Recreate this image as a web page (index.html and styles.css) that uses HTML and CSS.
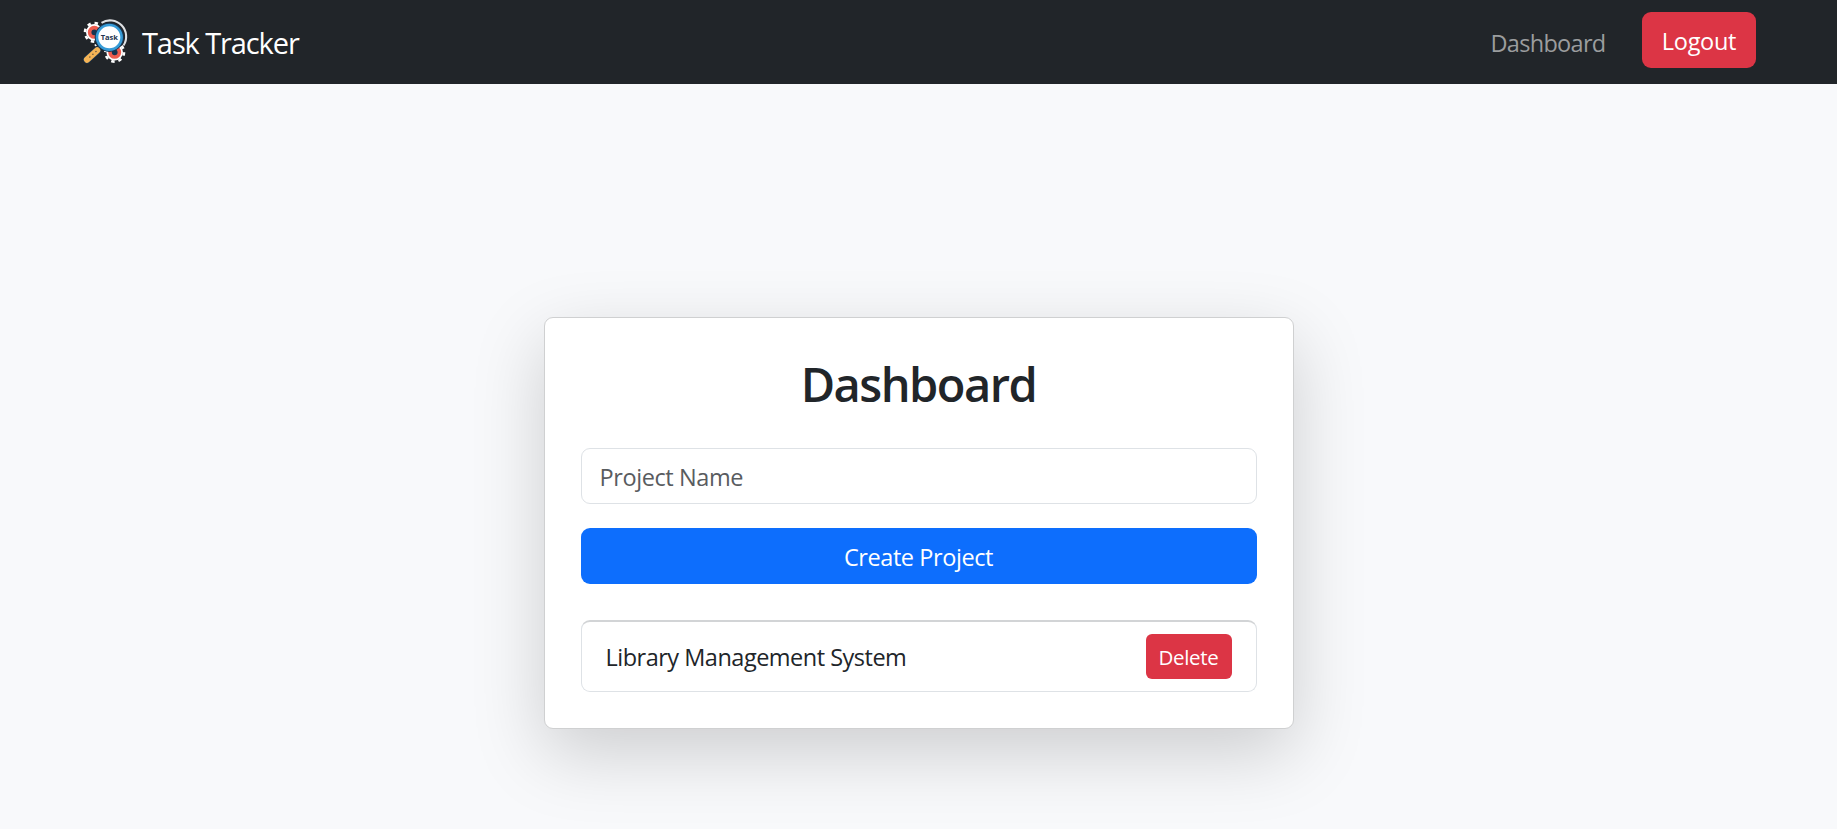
FILE: index.html
```
<!DOCTYPE html>
<html lang="en">
<head>
<meta charset="utf-8">
<title>Task Tracker</title>
<link rel="stylesheet" href="styles.css">
</head>
<body>
<nav class="navbar">
  <a class="brand" href="#">
    <svg class="logo" viewBox="0 0 52 52" aria-hidden="true">
      <g fill="none" stroke="#fff">
        <circle cx="14.3" cy="16.3" r="7" stroke-width="2.6"/>
        <circle cx="14.3" cy="16.3" r="9.3" stroke-width="2.6" stroke-dasharray="3.4 3.9"/>
        <circle cx="34.7" cy="36.3" r="7" stroke-width="2.6"/>
        <circle cx="34.7" cy="36.3" r="9.3" stroke-width="2.6" stroke-dasharray="3.4 3.9"/>
      </g>
      <g fill="#18344f" stroke="#ee5c4e" stroke-width="3.6">
        <circle cx="14.3" cy="16.3" r="4.7"/>
        <circle cx="34.7" cy="36.3" r="4.7"/>
      </g>
      <path d="M21.5 6.8A16.2 16.2 0 0 1 43.5 29.5" fill="none" stroke="#dfe1e4" stroke-width="2.1"/>
      <path d="M14.8 28.5l1.5 1.5M18 32l2-2" stroke="#fff" stroke-width="1.6"/>
      <path d="M17.2 34.4L7 43.6" stroke="#18344f" stroke-width="7.6" stroke-linecap="round"/>
      <path d="M17.2 34.4L7 43.6" stroke="#f5b455" stroke-width="6.2" stroke-linecap="round"/>
      <path d="M16 35.5L7 43.6" stroke="#59503f" stroke-width="1.4" stroke-linecap="round" stroke-dasharray=".1 4"/>
      <circle cx="29.3" cy="21.3" r="14.6" fill="#18344f"/>
      <circle cx="29.3" cy="21.3" r="12.3" fill="#fff" stroke="#369bd7" stroke-width="2.6"/>
      <text x="29.3" y="23.8" class="logo-text">Task</text>
    </svg>
    <span class="brand-name">Task Tracker</span>
  </a>
  <div class="nav-links">
    <a class="nav-link" href="#">Dashboard</a>
    <button class="btn btn-logout">Logout</button>
  </div>
</nav>
<main class="page">
  <section class="card">
    <h1 class="title">Dashboard</h1>
    <input class="field" type="text" placeholder="Project Name">
    <button class="btn btn-create">Create Project</button>
    <ul class="projects">
      <li class="project">
        <span class="project-name">Library Management System</span>
        <button class="btn btn-delete">Delete</button>
      </li>
    </ul>
  </section>
</main>
</body>
</html>
```
FILE: styles.css
```
* { box-sizing: border-box; }
body {
  margin: 0;
  height: 829px;
  display: flex;
  flex-direction: column;
  overflow: hidden;
  background: #f8f9fb;
  color: #212529;
  font-family: "Open Sans", "Noto Sans", sans-serif;
  font-size: 23.5px;
  letter-spacing: -.5px;
}
.navbar {
  height: 84px;
  flex: none;
  display: flex;
  justify-content: space-between;
  align-items: flex-start;
  padding: 12px 81px 0 80px;
  background: #212529;
}
.brand {
  display: flex;
  align-items: flex-start;
  gap: 10px;
  color: #fff;
  text-decoration: none;
}
.logo { width: 52px; height: 52px; margin-top: 4.3px; }
.logo-text { font: 700 7.5px "Open Sans", sans-serif; letter-spacing: 0; fill: #22344f; text-anchor: middle; }
.brand-name { font-size: 29px; line-height: 62px; letter-spacing: -1.1px; }
.nav-links { display: flex; align-items: flex-start; gap: 36.5px; }
.nav-link { color: #9b9d9e; text-decoration: none; line-height: 62px; letter-spacing: -.7px; }
.btn {
  border: 0;
  border-radius: 9px;
  color: #fff;
  font: inherit;
  letter-spacing: -.42px;
  padding: 2px 0 0;
  height: 56px;
  white-space: nowrap;
}
.btn-logout { width: 114px; background: #dc3545; letter-spacing: -.3px; }
.page {
  flex: 1;
  display: flex;
  justify-content: center;
  align-items: flex-start;
  padding-top: 233px;
}
.card {
  width: 750px;
  height: 412px;
  padding: 36px;
  background: #fff;
  border: 1px solid #cfd0d1;
  border-radius: 9px;
  box-shadow: 0 24px 72px rgba(0, 0, 0, .175);
}
.title {
  margin: 0 0 36px;
  padding-top: 3px;
  font-size: 47px;
  font-weight: 600;
  line-height: 55px;
  letter-spacing: -1.5px;
  text-align: center;
}
.field {
  display: block;
  width: 100%;
  height: 56px;
  margin-bottom: 24px;
  padding: 1px 18px 0;
  border: 1px solid #dee2e6;
  border-radius: 9px;
  background: #fff;
  font: inherit;
  letter-spacing: -.4px;
}
.field::placeholder { color: #595c5f; opacity: 1; }
.btn-create { display: block; width: 100%; background: #0d6efd; }
.projects { list-style: none; margin: 36px 0 0; padding: 0; }
.project {
  height: 72px;
  display: flex;
  justify-content: space-between;
  align-items: center;
  padding: 0 24px;
  border: 1px solid #dee2e6;
  border-top: 2px solid #d2d4d6;
  border-radius: 9px;
}
.btn-delete { width: 86px; height: 45px; padding-top: 0; border-radius: 6px; background: #dc3545; font-size: 20.5px; letter-spacing: -.3px; }
```
